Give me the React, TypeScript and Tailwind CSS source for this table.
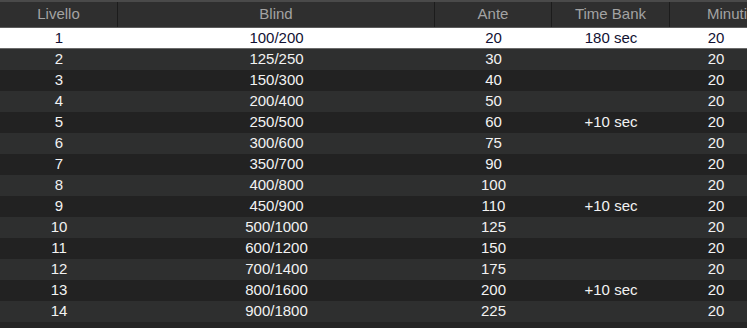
import React from "react";

type Level = {
  level: number;
  blind: string;
  ante: number;
  timeBank?: string;
  minutes: number;
};

const levels: Level[] = [
  { level: 1, blind: "100/200", ante: 20, timeBank: "180 sec", minutes: 20 },
  { level: 2, blind: "125/250", ante: 30, minutes: 20 },
  { level: 3, blind: "150/300", ante: 40, minutes: 20 },
  { level: 4, blind: "200/400", ante: 50, minutes: 20 },
  { level: 5, blind: "250/500", ante: 60, timeBank: "+10 sec", minutes: 20 },
  { level: 6, blind: "300/600", ante: 75, minutes: 20 },
  { level: 7, blind: "350/700", ante: 90, minutes: 20 },
  { level: 8, blind: "400/800", ante: 100, minutes: 20 },
  { level: 9, blind: "450/900", ante: 110, timeBank: "+10 sec", minutes: 20 },
  { level: 10, blind: "500/1000", ante: 125, minutes: 20 },
  { level: 11, blind: "600/1200", ante: 150, minutes: 20 },
  { level: 12, blind: "700/1400", ante: 175, minutes: 20 },
  { level: 13, blind: "800/1600", ante: 200, timeBank: "+10 sec", minutes: 20 },
  { level: 14, blind: "900/1800", ante: 225, minutes: 20 },
];

export default function App() {
  return (
    <div
      className="w-[747px] h-[328px] overflow-hidden bg-[#252525] text-[15px]"
      style={{ fontFamily: '"Liberation Sans", Arial, sans-serif' }}
    >
      {/* Header */}
      <div className="flex h-[28px] w-[800px] border-t-2 border-b border-t-[#4a4a4a] border-b-[#5c5c5c] bg-[#2f2f2f] text-[#a3a3a3]">
        <div className="flex w-[118px] shrink-0 items-center justify-center border-r border-[#1c1c1c]">
          Livello
        </div>
        <div className="flex w-[317px] shrink-0 items-center justify-center border-r border-[#1c1c1c]">
          Blind
        </div>
        <div className="flex w-[117px] shrink-0 items-center justify-center border-r border-[#1c1c1c]">
          Ante
        </div>
        <div className="flex w-[118px] shrink-0 items-center justify-center border-r border-[#1c1c1c]">
          Time Bank
        </div>
        <div className="flex w-[114px] shrink-0 items-center justify-center">
          Minuti
        </div>
      </div>

      {/* Rows */}
      {levels.map((row, i) => {
        const selected = i === 0;
        const bg = selected
          ? "bg-white text-[#111133] border-b border-[#6a6a6a]"
          : i % 2 === 1
            ? "bg-[#2e2f2f] text-[#f2f2f2]"
            : "bg-[#222222] text-[#f2f2f2]";
        return (
          <div key={row.level} className={`flex h-[21px] items-center ${bg}`}>
            <div className="w-[118px] shrink-0 text-center">{row.level}</div>
            <div className="w-[317px] shrink-0 text-center">{row.blind}</div>
            <div className="w-[117px] shrink-0 text-center">{row.ante}</div>
            <div className="w-[118px] shrink-0 text-center">
              {row.timeBank ?? ""}
            </div>
            <div className="w-[92px] shrink-0 text-center">{row.minutes}</div>
          </div>
        );
      })}
    </div>
  );
}
